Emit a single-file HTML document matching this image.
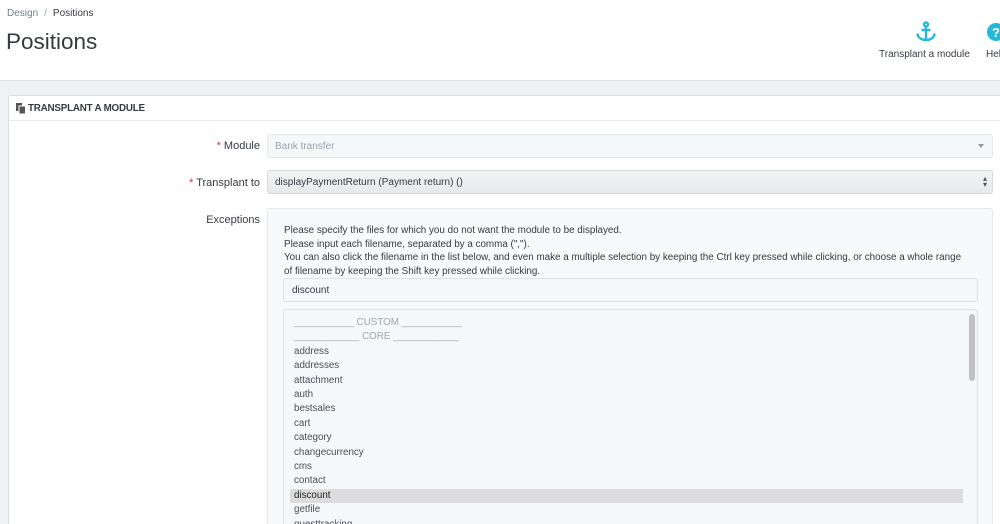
<!DOCTYPE html>
<html style="overflow:hidden;height:524px"><head><meta charset="utf-8"><style>
*{box-sizing:border-box;margin:0;padding:0}
html,body{width:1000px;height:524px;overflow:hidden}
body{background:#eff1f2;font-family:"Liberation Sans",sans-serif;color:#363a41;position:relative}
.hdr{position:absolute;left:0;top:0;width:1000px;height:81px;background:#fff;border-bottom:1px solid #dfe3e6}
.bc{position:absolute;left:7px;top:8px;font-size:10px;color:#6c868e}
.bc b{font-weight:normal;color:#363a41}
.bc i{font-style:normal;color:#72c279;margin:0 6px}
h1{position:absolute;left:6px;top:29px;font-size:22.5px;font-weight:normal;color:#363a41}
.tb{position:absolute;top:49px;font-size:10px;color:#363a41}
.panel{position:absolute;left:8px;top:95px;width:1000px;height:440px;background:#fff;border:1px solid #dcdfe2;border-radius:3px}
.ph{height:25px;border-bottom:1px solid #eee;font-size:9.8px;font-weight:bold;padding:7px 0 0 19px;color:#363a41;letter-spacing:-.2px}
.lbl{position:absolute;font-size:11px;color:#363a41;text-align:right;width:200px;left:60px}
.lbl span{color:#e52e2e}
.inp{position:absolute;left:267px;width:726px;height:24px;border:1px solid #e3e8ec;border-radius:3px;font-size:10px;padding:6px 7px}
.exc{position:absolute;left:267px;top:208px;width:726px;height:320px;border:1px solid #e3e8ec;border-radius:3px;background:#f7f9fa}
.txt{position:absolute;left:16px;top:15px;font-size:9.85px;line-height:13.7px;color:#363a41;white-space:nowrap}
.di{position:absolute;left:15px;top:69px;width:695px;height:24px;border:1px solid #dbe2e6;border-radius:3px;background:#f5f8f9;font-size:10px;padding:6px 8px}
.lst{position:absolute;left:15px;top:100px;width:695px;height:220px;border:1px solid #dbe2e6;border-radius:3px;background:#f5f8f9;overflow:hidden}
.it{position:absolute;left:6px;top:6px;width:673px;font-size:9.8px;line-height:14.4px;color:#4a4f55}
.it div{padding-left:4px}
.sb{position:absolute;right:2px;top:4px;width:6px;height:67px;background:#c1c1c1;border-radius:3px}
</style></head><body>
<div class="hdr">
<div class="bc">Design<i>/</i><b>Positions</b></div>
<h1>Positions</h1>
<svg style="position:absolute;left:915px;top:21px" width="22" height="22" viewBox="0 0 22 22"><g fill="none" stroke="#25b9d7" stroke-width="2.4"><circle cx="11" cy="3.5" r="2"/><line x1="11" y1="5.5" x2="11" y2="19"/><line x1="6.5" y1="9" x2="15.5" y2="9"/><path d="M2.5 12.5c0 4 4 6.5 8.5 6.5s8.5-2.5 8.5-6.5"/></g></svg>
<div class="tb" style="left:879px">Transplant a module</div>
<svg style="position:absolute;left:986px;top:22px" width="20" height="20"><circle cx="10" cy="10" r="9" fill="#25b9d7"/><text x="10" y="15" font-size="13" font-weight="bold" fill="#fff" text-anchor="middle" font-family="Liberation Sans">?</text></svg>
<div class="tb" style="left:986px">Help</div>
</div>
<div class="panel"><div class="ph"><svg style="position:absolute;left:7px;top:7px" width="10" height="11"><rect x="0" y="0" width="6" height="8" fill="#555"/><rect x="3" y="3" width="6.5" height="8" fill="#555" stroke="#fff" stroke-width="1"/></svg>TRANSPLANT A MODULE</div></div>
<div class="lbl" style="top:140px"><span>*</span> Module</div>
<div class="inp" style="top:134px;background:#f5f8f9;color:#9aa2a8">Bank transfer<span style="position:absolute;right:8px;top:9px;border:3px solid transparent;border-top:4px solid #999"></span></div>
<div class="lbl" style="top:177px"><span>*</span> Transplant to</div>
<div class="inp" style="top:170px;background:linear-gradient(#f3f4f4,#e6e9ea);border-color:#d6dadc;color:#363a41">displayPaymentReturn (Payment return) ()<span style="position:absolute;right:5px;top:5px;font-size:8px;line-height:6px;color:#555">▴<br>▾</span></div>
<div class="lbl" style="top:214px">Exceptions</div>
<div class="exc">
<div class="txt">Please specify the files for which you do not want the module to be displayed.<br>Please input each filename, separated by a comma (",").<br>You can also click the filename in the list below, and even make a multiple selection by keeping the Ctrl key pressed while clicking, or choose a whole range<br>of filename by keeping the Shift key pressed while clicking.</div>
<div class="di">discount</div>
<div class="lst"><div class="it">
<div style="color:#a0a6ab">___________ CUSTOM ___________</div>
<div style="color:#a0a6ab">____________ CORE ____________</div>
<div>address</div><div>addresses</div><div>attachment</div><div>auth</div><div>bestsales</div><div>cart</div><div>category</div><div>changecurrency</div><div>cms</div><div>contact</div><div style="background:#dcdcdc;color:#222">discount</div><div>getfile</div><div>guesttracking</div>
</div><div class="sb"></div></div>
</div>
</body></html>
